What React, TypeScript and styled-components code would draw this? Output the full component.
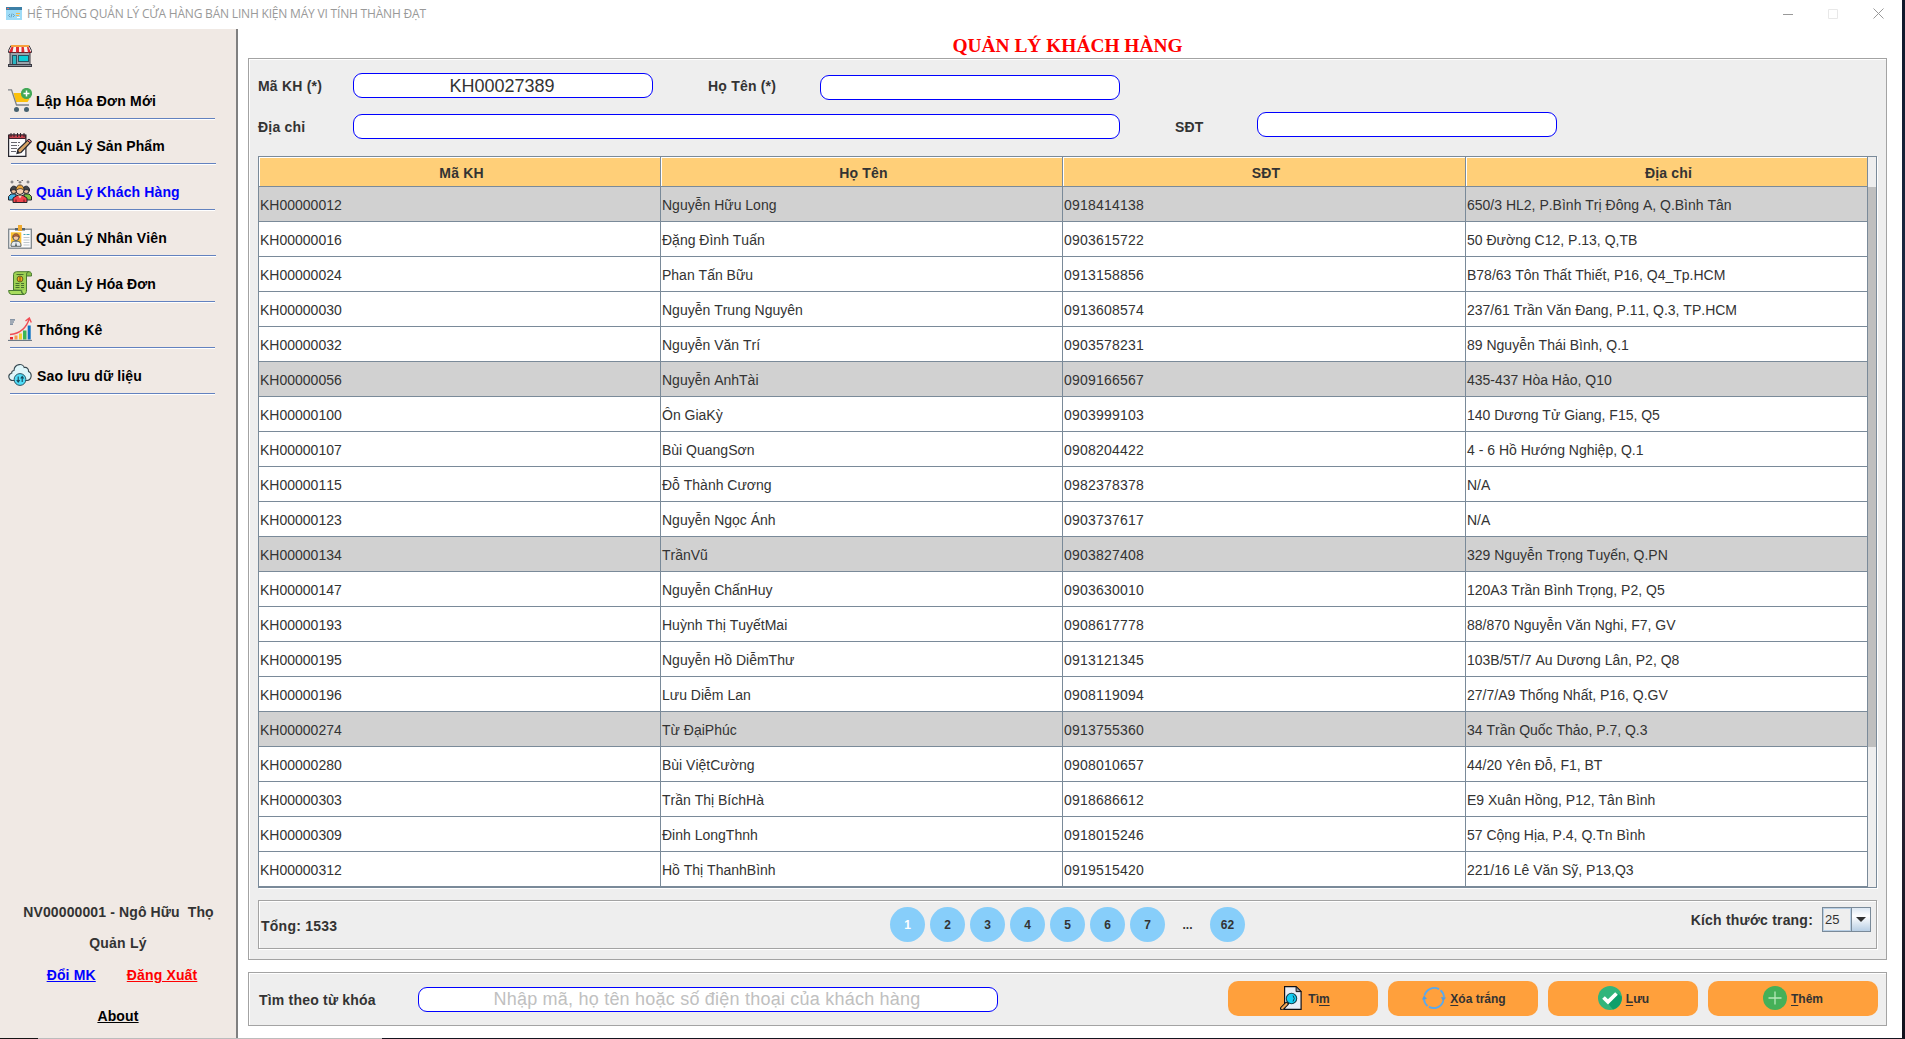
import React from "react";
import styled, { createGlobalStyle, css } from "styled-components";

const sans = `"Liberation Sans", Arial, sans-serif`;
const line = "#7a8a99";

const GlobalStyle = createGlobalStyle`
  * { box-sizing: border-box; }
  body { margin: 0; background: #fff; font-family: ${sans}; font-kerning: none; color: #333; overflow: hidden; }
  input, button { font-kerning: none; }
  svg { display: block; flex: none; }
`;

const Desktop = styled.div`
  width: 1905px;
  height: 1039px;
  display: grid;
  grid-template: 1038px 1px / 1902px 3px;
`;
const Window = styled.div`
  display: flex;
  flex-direction: column;
  background: #fff;
`;
const DesktopRight = styled.div`
  background: linear-gradient(#10182a, #1d2a44 30%, #1c2438 60%, #2a2334 75%, #10121c);
`;
const DesktopBottom = styled.div`
  grid-column: 1 / 3;
  background: linear-gradient(90deg, #151515 38px, #bcbcbc 38px 382px, #151520 382px);
`;

const TitleBar = styled.header`
  height: 29px;
  flex: none;
  display: flex;
  align-items: center;
  padding: 0 18px 3px 6px;
  font: 12px "Open Sans", "Noto Sans", sans-serif;
  color: #999;
`;
const AppTitle = styled.span`
  margin-left: 5px;
  letter-spacing: -0.19px;
  white-space: nowrap;
`;
const WindowButtons = styled.div`
  margin-left: auto;
  display: flex;
  gap: 35px;
`;
const Body = styled.div`
  flex: 1;
  display: flex;
`;

const Sidebar = styled.aside`
  width: 238px;
  border-right: 2px solid #808080;
  background: #f0e9e4;
  display: flex;
  flex-direction: column;
`;
const ShopSlot = styled.div`
  height: 45px;
  padding: 15px 0 0 8px;
`;
const NavItem = styled.a<{ $active?: boolean; $short?: boolean }>`
  height: ${(p) => (p.$short ? 45 : 46)}px;
  padding-left: 8px;
  display: flex;
  flex-direction: column;
  justify-content: flex-end;
  gap: 6px;
  color: ${(p) => (p.$active ? "#0000ff" : "#000")};
`;
const NavLine = styled.div`
  display: flex;
  height: 24px;
  align-items: center;
  gap: 4px;
  font-weight: bold;
  font-size: 14px;
`;
const NavText = styled.span<{ $tracking: number; $indent?: number }>`
  padding: 2px 0 0 ${(p) => p.$indent ?? 0}px;
  letter-spacing: ${(p) => p.$tracking}px;
  white-space: nowrap;
`;
const Separator = styled.div<{ $shift?: boolean }>`
  width: 205px;
  height: 2px;
  margin-left: ${(p) => (p.$shift ? 3 : 2)}px;
  border-top: 1px solid #6382bf;
  background: #fff;
`;
const UserBlock = styled.div`
  margin-top: auto;
  padding-bottom: 14px;
  font-size: 14px;
  font-weight: bold;
  line-height: 16px;
  text-align: center;
  white-space: pre;
  display: flex;
  flex-direction: column;
  align-items: center;
`;
const UserName = styled.div`
  letter-spacing: 0.12px;
  margin: 0 0 15px 1px;
`;
const UserRole = styled.div`
  letter-spacing: 0.2px;
`;
const UserLinks = styled.div`
  display: flex;
  gap: 31px;
  margin: 16px 0 25px 8px;
`;
const UserLink = styled.a<{ $color: string }>`
  color: ${(p) => p.$color};
  text-decoration: underline;
  letter-spacing: 0.15px;
`;

const Content = styled.main`
  flex: 1;
  padding: 0 15px 0 10px;
  display: flex;
  flex-direction: column;
`;
const PageTitle = styled.h1`
  margin: 0;
  height: 29px;
  padding-top: 6px;
  font: bold 19.4px/22px "Liberation Serif", "Times New Roman", serif;
  color: #ff0000;
  text-align: center;
`;
const etched = css`
  border: 1px solid #a3a3a3;
  box-shadow: inset 1px 1px 0 #fff, 1px 1px 0 #fff;
`;
const MainPanel = styled.section`
  ${etched}
  height: 902px;
  background: #eee;
  padding: 14px 9px 0;
`;
const Form = styled.form`
  display: grid;
  grid-template-columns: 95px 300px 55px 112px 300px 55px 82px 300px;
  grid-template-rows: 27px 27px;
  row-gap: 12px;
`;
const Label = styled.label<{ $column?: number; $lift?: number }>`
  grid-column: ${(p) => p.$column ?? "auto"};
  align-self: center;
  padding-bottom: ${(p) => p.$lift ?? 0}px;
  font-size: 14px;
  font-weight: bold;
  white-space: nowrap;
  letter-spacing: 0.2px;
`;
const LowLabel = styled(Label)`
  padding-top: 2px;
`;
const Field = styled.input<{ $column?: string; $top?: boolean }>`
  grid-column: ${(p) => p.$column ?? "auto"};
  align-self: ${(p) => (p.$top ? "start" : "end")};
  width: 100%;
  height: 25px;
  padding: 1px 2px 0 0;
  border: 1px solid #0000ff;
  border-radius: 9px;
  background: #fff;
  font: 18px ${sans};
  color: #333;
  text-align: center;
  outline: none;
`;
const SearchField = styled(Field)`
  width: 580px;
  align-self: center;
  letter-spacing: 0.22px;
  &::placeholder { color: #c0c0c0; opacity: 1; }
`;

const columns = "402px 402px 403px 402px";
const TableBox = styled.div`
  margin-top: 17px;
  height: 732px;
  display: flex;
  border: 1px solid ${line};
  box-shadow: 1px 1px 0 #fff;
`;
const Table = styled.div`
  width: 1609px;
  background: #fff;
`;
const HeaderRow = styled.div`
  display: grid;
  grid-template-columns: ${columns};
  height: 30px;
`;
const HeaderCell = styled.div`
  border-right: 1px solid ${line};
  border-bottom: 1px solid ${line};
  box-shadow: inset 1px 1px 0 #fff;
  background: #ffcf78;
  padding: 3px 0 0 4px;
  font-size: 14px;
  font-weight: bold;
  letter-spacing: 0.15px;
  display: flex;
  align-items: center;
  justify-content: center;
`;
const Row = styled.div<{ $dark: boolean }>`
  display: grid;
  grid-template-columns: ${columns};
  height: 35px;
  background: ${(p) => (p.$dark ? "#d1d1d1" : "#fff")};
`;
const Cell = styled.div<{ $digits: boolean }>`
  border-right: 1px solid ${line};
  border-bottom: 1px solid ${line};
  padding: 2px 0 0 1px;
  display: flex;
  align-items: center;
  font-size: 14px;
  letter-spacing: ${(p) => (p.$digits ? 0.21 : 0)}px;
  white-space: pre;
`;
const ScrollTrack = styled.div`
  width: 8px;
  padding-top: 30px;
  background: #eee;
`;
const ScrollThumb = styled.div`
  height: 560px;
  background: #bfbfbf;
`;

const PagerBar = styled.div`
  ${etched}
  height: 49px;
  margin-top: 12px;
  display: grid;
  grid-template-columns: 631px auto 1fr;
  padding: 6px 5px 0 0;
`;
const Total = styled.div`
  padding: 11px 0 0 2px;
  font-size: 14px;
  font-weight: bold;
  letter-spacing: 0.25px;
`;
const Pages = styled.div`
  display: flex;
  gap: 5px;
`;
const Page = styled.button<{ $state?: "current" | "gap" }>`
  width: 35px;
  height: 35px;
  padding: 0;
  border: 0;
  border-radius: 50%;
  font: bold 12px ${sans};
  background: ${(p) => (p.$state === "gap" ? "transparent" : "#87cefa")};
  color: ${(p) => (p.$state === "current" ? "#fff" : "#333")};
`;
const PageSize = styled.div`
  display: flex;
  justify-content: flex-end;
  align-items: center;
  gap: 9px;
  height: 25px;
`;
const Combo = styled.div`
  width: 49px;
  height: 25px;
  display: grid;
  grid-template-columns: 28px 19px;
  border: 1px solid ${line};
`;
const ComboValue = styled.span`
  border: 1px solid #b8cfe5;
  padding: 3px 0 0 1px;
  font: 13px ${sans};
`;
const ComboArrow = styled.span`
  border-left: 1px solid ${line};
  background: linear-gradient(#dde8f3, #fff 35%, #b8cfe5);
  display: flex;
  align-items: center;
  justify-content: center;
`;

const SearchPanel = styled.section`
  ${etched}
  height: 54px;
  margin-top: 12px;
  background: #eee;
  display: flex;
  align-items: center;
  padding: 0 8px 0 10px;
`;
const SearchLabel = styled(Label)`
  width: 159px;
  padding-top: 2px;
`;
const Actions = styled.div`
  margin-left: auto;
  align-self: flex-start;
  padding-top: 8px;
  display: flex;
  gap: 10px;
`;
const Action = styled.button<{ $width: number; $shift?: number }>`
  width: ${(p) => p.$width}px;
  height: 35px;
  padding: 0 0 2px ${(p) => p.$shift ?? 0}px;
  border: 0;
  border-radius: 10px;
  background: #ffa03c;
  color: #333;
  font: bold 12px ${sans};
  display: flex;
  align-items: center;
  justify-content: center;
  gap: 4px;
`;
const ActionText = styled.span`
  padding-top: 2px;
  text-underline-offset: 2px;
`;

const AppIcon = () => (
  <svg width="16" height="13" viewBox="0 0 16 13">
    <rect width="16" height="13" fill="#9fdcf7" />
    <rect width="16" height="3" fill="#3c7fa6" />
    <path d="M1 1.500h2" stroke="#f36a5a" />
    <path d="M4 7 2.500 8.500 4 10M7 7l1.500 1.500L7 10M6 6.500 5 10.500" stroke="#5b95b5" fill="none" strokeWidth=".8" />
    <path d="M10 6.500h4M10 8.500h3" stroke="#f2b84b" />
    <path d="M11 10.500h3" stroke="#fff" />
  </svg>
);
const ShopIcon = () => (
  <svg width="24" height="24" viewBox="0 0 24 24">
    <path d="M2 8h20v14H2z" fill="#9aa3ab" stroke="#3a3a42" />
    <path d="M3 1.500h18l2.500 5v2H.5v-2z" fill="#f4f4f4" stroke="#3a3a42" />
    <path d="M3 1h18v2H3z" fill="#f6a03d" />
    <path d="M3.500 3 1 8h3.500l1-5zM8 3v5.500h3V3zM13.500 3v5.500h3L15.800 3zM19 3l1 5.500h3L20.500 3z" fill="#e02b33" />
    <path d="M1 8.500h22" stroke="#702028" strokeDasharray="3 1" />
    <rect x="4.500" y="11.500" width="4" height="9" fill="#2ab8c4" stroke="#2b5260" />
    <rect x="10.500" y="11.500" width="10" height="6" fill="#0ecbd6" stroke="#2b5260" />
    <rect x=".5" y="20.500" width="23" height="2" fill="#8b8f98" stroke="#3a3a42" />
  </svg>
);
const CartIcon = () => (
  <svg width="24" height="24" viewBox="0 0 24 24">
    <path d="M5.500 5H17l4.500 6-2 3H8z" fill="#fcc10b" />
    <path d="M0 1.800h3.500L8.500 17H21" fill="none" stroke="#7d8287" strokeWidth="1.300" />
    <circle cx="8.500" cy="21.500" r="2.500" fill="#46616f" />
    <circle cx="18.500" cy="21.500" r="2.500" fill="#46616f" />
    <circle cx="18.500" cy="5.500" r="5.600" fill="#43a857" />
    <path d="M18.500 2.500v6M15.500 5.500h6" stroke="#fff" strokeWidth="1.500" />
  </svg>
);
const NotepadIcon = () => (
  <svg width="24" height="24" viewBox="0 0 24 24">
    <path d="M.6 2h17.300v21.400H.6z" fill="#fbfbfd" stroke="#26262e" strokeWidth="1.200" />
    <path d="M1 2h16.500v3.500H1z" fill="#c9444f" stroke="#40202a" />
    <path d="M3 0v4M6 0v4M9.500 0v4M12.500 0v4M16 0v4" stroke="#33232b" />
    <path d="M3 9.500h9M3 12.500h8M3 15.500h6M3 18.500h5" stroke="#66666e" strokeDasharray="6 1" />
    <path d="M9 20.500 10 16.500 20.500 6.500 23 9 13 19.500z" fill="#d9a566" stroke="#26262e" strokeWidth="1.200" />
    <path d="M19.500 7.500 21 6l2.500 2.300-1.600 1.600z" fill="#e8707a" stroke="#26262e" />
    <path d="M9 20.500l.8-3 2 2z" fill="#26262e" />
  </svg>
);
const PeopleIcon = () => (
  <svg width="24" height="24" viewBox="0 0 24 24">
    <path d="M2.500 3h3M4 1.500v3M18.500 3h3M20 1.500v3M9 1.500h1.500M13.500 1.500H15M10.500 3.200h3M12 2v2.500" stroke="#66666a" />
    <path d="M.5 21v-3.500L3 15h5v6z" fill="#44b5e8" stroke="#25252c" />
    <path d="M16 15h5l2.500 2.500V21H16z" fill="#7cc142" stroke="#25252c" />
    <circle cx="5.800" cy="11.500" r="3" fill="#eebd98" stroke="#25252c" />
    <path d="M2.500 12c-.5-6.500 7-6.500 6.500 0-1.500-1.500-4.500-2-6.500 0z" fill="#40454c" stroke="#25252c" />
    <circle cx="18.200" cy="11.500" r="3" fill="#eebd98" stroke="#25252c" />
    <path d="M15 12c-.5-6.500 7-6.500 6.500 0-2-2-5-1.500-6.500 0z" fill="#40454c" stroke="#25252c" />
    <path d="M5 23.500V19l4-2.500h6l4 2.500v4.500z" fill="#f0434b" stroke="#25252c" />
    <path d="m10 16.500 2 3 2-3z" fill="#f8cfae" />
    <circle cx="12" cy="11.500" r="4" fill="#f8cfae" stroke="#25252c" />
    <path d="M8 11.500c-.5-7.500 8.500-7.500 8 0-2-2.500-5-2.500-8 0z" fill="#eaa43a" stroke="#25252c" strokeWidth=".8" />
    <path d="M8 20.500v3M16 20.500v3" stroke="#601820" />
  </svg>
);
const BadgeIcon = () => (
  <svg width="24" height="24" viewBox="0 0 24 24">
    <rect x=".7" y="4.200" width="22.600" height="19" fill="#fdfdfd" stroke="#7d858c" strokeWidth="1.300" />
    <path d="M7 3h10v2.500H7z" fill="#55606a" />
    <path d="M10 0h4v6h-4z" fill="#efa92f" />
    <rect x="2.800" y="7.300" width="10.500" height="14" fill="#fbc02e" />
    <path d="M3 21.300c0-5 2.500-5 5-5s5 0 5 5z" fill="#e7ecef" stroke="#4c5a66" strokeWidth=".9" />
    <circle cx="8" cy="12.500" r="3" fill="#f6c9a2" stroke="#4c5a66" />
    <path d="M4.700 12.500c-.3-5 7-5 6.600 0-2-2-4.500-2-6.600 0z" fill="#c46a35" stroke="#5a4038" strokeWidth=".7" />
    <path d="m8 17 1 4H7z" fill="#4c5a66" />
    <path d="M15.500 9.500h2M18.500 9.500h3" stroke="#47a5b8" />
    <path d="M15.500 12.500h6M15.500 15h6M15.500 17.500h6M15.500 20h6" stroke="#c0c8cc" />
  </svg>
);
const InvoiceIcon = () => (
  <svg width="24" height="24" viewBox="0 0 24 24">
    <path d="M5.500 19V3.500Q5.500.7 8.500.7H21Q18.500.7 18.500 4v15.500z" fill="#9ed253" stroke="#4a7a32" />
    <path d="M21 .7q3 0 2.500 4.300h-5Q18.300.7 21 .7z" fill="#8bc34a" stroke="#4a7a32" />
    <path d="M.6 19.500h12.500q.3 4 3 4H3.500Q.6 23 .6 19.500zM13.500 19.500q.5 3.800 2.700 3.800 2.300 0 2.300-5" fill="#a9dd5d" stroke="#4a7a32" />
    <path d="M8.500 3.500h7M7.500 12.500h4M13 12.500h3M7.500 14.500h4M13 14.500h3M7.500 16.500h4M13 16.500h3" stroke="#47702f" />
    <circle cx="12" cy="8" r="2.900" fill="#f4a91e" stroke="#55571f" strokeWidth=".9" />
    <path d="M12 6v4" stroke="#6a4a10" />
  </svg>
);
const ChartIcon = () => (
  <svg width="24" height="24" viewBox="0 0 24 24">
    <path d="M2 2.800h5M2 5h4M2 7.200h3" stroke="#8795a5" strokeWidth="1.700" />
    <path d="M2 17.500Q17 16 21.300 1.500M17.500 4l3.800-3 2 4.500" fill="none" stroke="#f04e55" strokeWidth="1.400" />
    <path d="M2 20h3v2.500H2z" fill="#e8282f" />
    <path d="M6.500 18.500h3v4h-3z" fill="#f59a52" />
    <path d="M11 16.500h3v6h-3z" fill="#f5ce2e" />
    <path d="M15 13.500h3.500v9H15z" fill="#3bb553" />
    <path d="M19.700 8.500h3v14h-3z" fill="#0d74c4" />
    <path d="M0 23.400h24" stroke="#5f6d7a" />
  </svg>
);
const CloudIcon = () => (
  <svg width="24" height="24" viewBox="0 0 24 24">
    <path d="M5 17.500C.5 17.500-1 11.500 3.800 10 3.500 8.500 5 7.500 6 7.500 6.500 0 15.500.3 16.200 4.500c2.800-.7 4.600 1.500 4.300 4C24.500 10 24 17 19 17.500z" fill="#dff6fa" stroke="#36474f" strokeWidth="1.100" />
    <circle cx="12" cy="16.500" r="5.900" fill="#4fdcf8" stroke="#2f5562" />
    <path d="M10.200 13.500v5M8.700 17l1.500 2 1.500-2M14.200 19v-5M12.700 15.500l1.500-2 1.500 2" fill="none" stroke="#174a5c" strokeWidth="1.100" />
  </svg>
);
const FindIcon = () => (
  <svg width="24" height="24" viewBox="0 0 24 24">
    <path d="M4.600.6h11.500l5 5v17.800H4.600z" fill="#e9edf5" stroke="#101014" strokeWidth="1.200" />
    <path d="M16.100.6v5h5z" fill="#8f96a3" stroke="#101014" />
    <path d="m7 17.500-5 5" stroke="#101014" strokeWidth="4" strokeLinecap="round" />
    <path d="m6.500 18-4.300 4.300" stroke="#f2a655" strokeWidth="2.200" strokeLinecap="round" />
    <circle cx="11.500" cy="12.500" r="5.200" fill="#12cff5" stroke="#15424f" strokeWidth="1.100" />
    <path d="M13 9.500q2.500 3 0 6" fill="none" stroke="#15424f" />
  </svg>
);
const RefreshIcon = () => (
  <svg width="24" height="24" viewBox="0 0 24 24">
    <path
      d="M2.500 9.500A10 10 0 0 1 17 3.200M18.500 4.200A10 10 0 0 1 22 11M21.300 15A10 10 0 0 1 7 20.800M5.500 20A10 10 0 0 1 2 13"
      fill="none"
      stroke="#5aa9ee"
      strokeWidth="1.900"
    />
    <path d="M0 13.500 2 9.500l3 3.500zM19 11l5 .5-3 4z" fill="#4f9fe8" />
  </svg>
);
const CheckIcon = () => (
  <svg width="24" height="24" viewBox="0 0 24 24">
    <circle cx="12" cy="12" r="12" fill="#31b57b" />
    <path d="M10 17.500 20 7.500l3.800 3.200A12 12 0 0 1 15 23.600z" fill="#0d9f6b" />
    <path d="m5.500 11.500 4.500 4.300 8.500-8.300" fill="none" stroke="#fff" strokeWidth="3.800" />
  </svg>
);
const PlusIcon = () => (
  <svg width="24" height="24" viewBox="0 0 24 24">
    <circle cx="12" cy="12" r="12" fill="#45b058" />
    <path d="M12 5.500v13M5.500 12h13" stroke="#b5e8b9" strokeWidth="1.300" />
  </svg>
);

const nav = [
  { text: "Lập Hóa Đơn Mới", icon: <CartIcon />, tracking: 0.2 },
  { text: "Quản Lý Sản Phẩm", icon: <NotepadIcon />, tracking: 0.07 },
  { text: "Quản Lý Khách Hàng", icon: <PeopleIcon />, tracking: 0.12 },
  { text: "Quản Lý Nhân Viên", icon: <BadgeIcon />, tracking: 0.15 },
  { text: "Quản Lý Hóa Đơn", icon: <InvoiceIcon />, tracking: 0.07 },
  { text: "Thống Kê", icon: <ChartIcon />, tracking: 0.1, indent: 1 },
  { text: "Sao lưu dữ liệu", icon: <CloudIcon />, tracking: 0.15, indent: 1 },
];

const headers = ["Mã KH", "Họ Tên", "SĐT", "Địa chỉ"];
const customers = [
  ["KH00000012", "Nguyễn Hữu Long", "0918414138", "650/3 HL2, P.Bình Trị Đông A, Q.Bình Tân"],
  ["KH00000016", "Đặng Đình Tuấn", "0903615722", "50 Đường C12, P.13, Q,TB"],
  ["KH00000024", "Phan Tấn Bữu", "0913158856", "B78/63 Tôn Thất Thiết, P16, Q4_Tp.HCM"],
  ["KH00000030", "Nguyễn Trung Nguyên", "0913608574", "237/61 Trần Văn Đang, P.11, Q.3, TP.HCM"],
  ["KH00000032", "Nguyễn Văn Trí", "0903578231", "89 Nguyễn Thái Bình, Q.1"],
  ["KH00000056", "Nguyễn AnhTài", "0909166567", "435-437 Hòa Hảo, Q10"],
  ["KH00000100", "Ôn GiaKỳ", "0903999103", "140 Dương Tử Giang, F15, Q5"],
  ["KH00000107", "Bùi QuangSơn", "0908204422", "4 - 6 Hồ Hướng Nghiệp, Q.1"],
  ["KH00000115", "Đỗ Thành Cương", "0982378378", "N/A"],
  ["KH00000123", "Nguyễn Ngọc Ánh", "0903737617", "N/A"],
  ["KH00000134", "TrầnVũ", "0903827408", "329 Nguyễn Trọng Tuyển, Q.PN"],
  ["KH00000147", "Nguyễn ChấnHuy", "0903630010", "120A3 Trần Bình Trọng, P2, Q5"],
  ["KH00000193", "Huỳnh Thị TuyếtMai", "0908617778", "88/870 Nguyễn Văn Nghi, F7, GV"],
  ["KH00000195", "Nguyễn Hồ DiễmThư", "0913121345", "103B/5T/7 Au Dương Lân, P2, Q8"],
  ["KH00000196", "Lưu Diễm Lan", "0908119094", "27/7/A9 Thống Nhất, P16, Q.GV"],
  ["KH00000274", "Từ ĐạiPhúc", "0913755360", "34 Trần Quốc Thảo, P.7, Q.3"],
  ["KH00000280", "Bùi ViệtCường", "0908010657", "44/20 Yên Đỗ, F1, BT"],
  ["KH00000303", "Trần Thị BíchHà", "0918686612", "E9 Xuân Hồng, P12, Tân Bình"],
  ["KH00000309", "Đinh LongThnh", "0918015246", "57 Cộng Hịa, P.4, Q.Tn Bình"],
  ["KH00000312", "Hồ Thị ThanhBình", "0919515420", "221/16 Lê Văn Sỹ, P13,Q3"],
];
const pages = ["1", "2", "3", "4", "5", "6", "7", "...", "62"];

export default function App() {
  return (
    <>
      <GlobalStyle />
      <Desktop>
        <Window>
          <TitleBar>
            <AppIcon />
            <AppTitle>HỆ THỐNG QUẢN LÝ CỬA HÀNG BÁN LINH KIỆN MÁY VI TÍNH THÀNH ĐẠT</AppTitle>
            <WindowButtons>
              <svg width="10" height="11"><path d="M0 6.500h10" stroke="#999" /></svg>
              <svg width="10" height="11"><path d="M.5 1.500h9v9h-9z" fill="none" stroke="#e8e8e8" /></svg>
              <svg width="11" height="11"><path d="m.5.5 10 10m0-10-10 10" stroke="#999" /></svg>
            </WindowButtons>
          </TitleBar>
          <Body>
            <Sidebar>
              <ShopSlot><ShopIcon /></ShopSlot>
              {nav.map((item, i) => (
                <NavItem key={item.text} $active={i === 2} $short={i === 1}>
                  <NavLine>
                    {item.icon}
                    <NavText $tracking={item.tracking} $indent={item.indent}>{item.text}</NavText>
                  </NavLine>
                  <Separator $shift={i === 1 || i === 3} />
                </NavItem>
              ))}
              <UserBlock>
                <UserName>NV00000001 - Ngô Hữu{"  "}Thọ</UserName>
                <UserRole>Quản Lý</UserRole>
                <UserLinks>
                  <UserLink $color="#0000ff">Đổi MK</UserLink>
                  <UserLink $color="#ff0000">Đăng Xuất</UserLink>
                </UserLinks>
                <UserLink $color="#000">About</UserLink>
              </UserBlock>
            </Sidebar>
            <Content>
              <PageTitle>QUẢN LÝ KHÁCH HÀNG</PageTitle>
              <MainPanel>
                <Form>
                  <Label $lift={2}>Mã KH (*)</Label>
                  <Field $top defaultValue="KH00027389" />
                  <Label $column={4} $lift={2}>Họ Tên (*)</Label>
                  <Field $column="5" />
                  <LowLabel $column={1}>Địa chỉ</LowLabel>
                  <Field $column="2 / 6" />
                  <LowLabel $column={7}>SĐT</LowLabel>
                  <Field $column="8" $top />
                </Form>
                <TableBox>
                  <Table>
                    <HeaderRow>
                      {headers.map((h) => <HeaderCell key={h}>{h}</HeaderCell>)}
                    </HeaderRow>
                    {customers.map((row, i) => (
                      <Row key={row[0]} $dark={i % 5 === 0}>
                        {row.map((value, c) => <Cell key={c} $digits={c === 2}>{value}</Cell>)}
                      </Row>
                    ))}
                  </Table>
                  <ScrollTrack><ScrollThumb /></ScrollTrack>
                </TableBox>
                <PagerBar>
                  <Total>Tổng: 1533</Total>
                  <Pages>
                    {pages.map((p) => (
                      <Page key={p} $state={p === "1" ? "current" : p === "..." ? "gap" : undefined}>{p}</Page>
                    ))}
                  </Pages>
                  <PageSize>
                    <Label>Kích thước trang:</Label>
                    <Combo>
                      <ComboValue>25</ComboValue>
                      <ComboArrow>
                        <svg width="10" height="5"><path d="M0 0h10L5 5z" fill="#333" /></svg>
                      </ComboArrow>
                    </Combo>
                  </PageSize>
                </PagerBar>
              </MainPanel>
              <SearchPanel>
                <SearchLabel>Tìm theo từ khóa</SearchLabel>
                <SearchField placeholder="Nhập mã, họ tên hoặc số điện thoại của khách hàng" />
                <Actions>
                  <Action $width={150} $shift={4}><FindIcon /><ActionText>Tì<u>m</u></ActionText></Action>
                  <Action $width={150} $shift={2}><RefreshIcon /><ActionText><u>X</u>óa trắng</ActionText></Action>
                  <Action $width={150} $shift={1}><CheckIcon /><ActionText><u>L</u>ưu</ActionText></Action>
                  <Action $width={170}><PlusIcon /><ActionText><u>T</u>hêm</ActionText></Action>
                </Actions>
              </SearchPanel>
            </Content>
          </Body>
        </Window>
        <DesktopRight />
        <DesktopBottom />
      </Desktop>
    </>
  );
}
